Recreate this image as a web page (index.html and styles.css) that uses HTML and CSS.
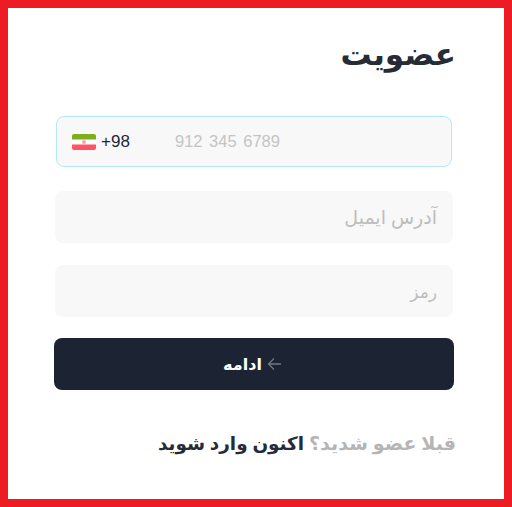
FILE: index.html
```html
<!DOCTYPE html>
<html lang="fa" dir="rtl">
<head>
<meta charset="utf-8">
<title>عضویت</title>
<link rel="stylesheet" href="styles.css">
</head>
<body>
<main class="frame">
  <h1 class="title">عضویت</h1>
  <form class="form">
    <div class="phone" dir="ltr">
      <svg class="flag" width="24" height="16" viewBox="0 0 24 16" aria-hidden="true">
        <defs><clipPath id="r"><rect width="24" height="16" rx="2"/></clipPath></defs>
        <g clip-path="url(#r)">
          <rect width="24" height="6" fill="#7cae1e"/>
          <rect y="5.5" width="24" height="5" fill="#fff"/>
          <rect y="10.5" width="24" height="5.5" fill="#ff5468"/>
          <circle cx="12" cy="8" r="1.9" fill="#f4a3ab"/>
        </g>
      </svg>
      <span class="code">+98</span>
      <span class="ph num">912 345 6789</span>
    </div>
    <div class="field"><span class="ph email">آدرس ایمیل</span></div>
    <div class="field"><span class="ph pass">رمز</span></div>
    <button class="btn" type="button">
      <svg width="15" height="16" viewBox="0 0 15 16" fill="none" stroke="#6f7683" stroke-width="1.3" aria-hidden="true"><path d="M14 8H1.5M7 2.5 1.5 8 7 13.5"/></svg>
      <span>ادامه</span>
    </button>
  </form>
  <p class="foot"><span class="muted">قبلا عضو شدید؟</span> <b>اکنون وارد شوید</b></p>
</main>
</body>
</html>
```
FILE: styles.css
```css
* { box-sizing: border-box; }
html, body { margin: 0; height: 100%; }
body { font-family: "Noto Sans", "DejaVu Sans", sans-serif; background: #fff; }
.frame {
  height: 507px;
  border: 8px solid #ed1c24;
  padding: 21px 50px 0 46px;
  color: #1f2735;
}
.title { margin: 0 -2px 0 0; font-size: 31px; font-weight: 700; line-height: 48px; height: 63px; color: #252c38; }
.form { display: flex; flex-direction: column; margin-top: 24px; }
.phone {
  height: 51px; margin: 0 2px;
  display: flex; align-items: center;
  padding: 0 15px;
  background: #f8f8f8; border: 1px solid #b2ebf5; border-radius: 8px;
}
.flag { flex: none; }
.code { font: 17px "Liberation Sans", sans-serif; margin-left: 5px; color: #1f2735; width: 74px; }
.ph { color: #bdbdbd; }
.email { font-size: 19px; }
.pass { font-size: 17px; }
.num { font: 16.5px "Liberation Sans", sans-serif; color: #c4c4c4; word-spacing: 2px; }
.field {
  height: 52px; margin: 24px 1px 0;
  display: flex; align-items: center; padding: 0 16px;
  background: #f8f8f8; border-radius: 8px;
}
.field + .field { margin-top: 22px; }
.btn {
  height: 52px; margin-top: 21px; border: 0; border-radius: 8px;
  background: #1c2434; color: #fff;
  display: flex; align-items: center; justify-content: center; gap: 5px;
  padding: 0 3px 0 0;
  font: 700 16px "Noto Sans", "DejaVu Sans", sans-serif;
}
.foot { margin: 39px -2px 0 0; font-size: 19px; line-height: 28px; color: #252c38; }
.foot b { font-size: 18.4px; }
.muted { color: #b5b5b5; font-weight: 700; }
```
